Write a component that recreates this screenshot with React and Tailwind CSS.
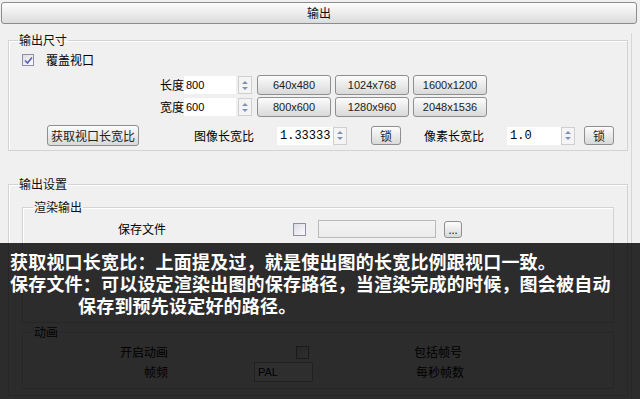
import React from "react";

const cjk = "font-['Noto_Sans_CJK_SC',sans-serif]";
const sans = "font-['Liberation_Sans',sans-serif]";
const mono = "font-['Liberation_Mono',monospace]";

const Btn = ({ className = "", children }) => (
  <button
    className={`flex items-center justify-center rounded-[3px] border border-[#8e8f8f] bg-linear-to-b from-[#fcfcfc] to-[#d9d9d9] text-[11px] leading-none text-[#222] ${className}`}
  >
    {children}
  </button>
);

const Spinner = ({ className = "" }) => (
  <div
    className={`flex h-[18px] w-[14px] flex-col items-center justify-center gap-[3px] border border-[#cfcfcf] bg-[#f4f4f4] ${className}`}
  >
    <svg width="6" height="3" viewBox="0 0 6 3">
      <path d="M0 3 L3 0 L6 3 Z" fill="#7f93b3" />
    </svg>
    <svg width="6" height="3" viewBox="0 0 6 3">
      <path d="M0 0 L3 3 L6 0 Z" fill="#7f93b3" />
    </svg>
  </div>
);

const Check = ({ checked, className = "" }) => (
  <div
    className={`flex h-[12px] w-[12px] items-center justify-center border border-[#8f8fa3] bg-linear-to-br from-[#dcdce6] to-[#fbfbfb] ${className}`}
  >
    {checked && (
      <svg width="9" height="9" viewBox="0 0 9 9">
        <path d="M1 4.5 L3.5 7 L8 1.5" stroke="#5b5fb0" strokeWidth="1.6" fill="none" />
      </svg>
    )}
  </div>
);

const Group = ({ label, className = "", legendClass = "ml-[9px]", children }) => (
  <fieldset className={`border border-[#d3d3d3] shadow-[inset_1px_1px_0_#ffffff] ${className}`}>
    <legend className={`px-[1px] text-[12px] leading-[14px] text-[#111] ${legendClass}`}>
      {label}
    </legend>
    {children}
  </fieldset>
);

export default function App() {
  return (
    <div className={`relative h-[399px] w-[640px] overflow-hidden bg-[#f0f0f0] ${cjk}`}>
      {/* title bar */}
      <div className="mx-[1px] mt-[2px] flex h-[22px] w-[636px] items-center justify-center rounded-[3px] border border-[#8c8c8c] bg-linear-to-b from-[#fdfdfd] to-[#dcdcdc] text-[12px] text-[#111]">
        输出
      </div>

      <div className="w-[632px] border-r border-[#d6d6d6] pb-[20px]">
        {/* 输出尺寸 */}
        <Group label="输出尺寸" className="mt-[9px] ml-[8px] w-[620px] pb-[4px]">
          <div className="mt-[6px] flex h-[14px] items-center pl-[13px]">
            <Check checked />
            <span className="ml-[12px] text-[12px] leading-[14px]">覆盖视口</span>
          </div>

          <div className="mt-[8px] flex h-[20px] items-center pl-[151px]">
            <span className="w-[24px] text-[12px]">长度</span>
            <div className={`flex h-[18px] w-[52px] items-center bg-white pl-[2px] text-[11px] ${sans}`}>800</div>
            <Spinner className="ml-[2px]" />
            <div className={`ml-[5px] flex gap-[4px] ${sans}`}>
              <Btn className="h-[20px] w-[74px]">640x480</Btn>
              <Btn className="h-[20px] w-[74px]">1024x768</Btn>
              <Btn className="h-[20px] w-[74px]">1600x1200</Btn>
            </div>
          </div>

          <div className="mt-[2px] flex h-[20px] items-center pl-[151px]">
            <span className="w-[24px] text-[12px]">宽度</span>
            <div className={`flex h-[18px] w-[52px] items-center bg-white pl-[2px] text-[11px] ${sans}`}>600</div>
            <Spinner className="ml-[2px]" />
            <div className={`ml-[5px] flex gap-[4px] ${sans}`}>
              <Btn className="h-[20px] w-[74px]">800x600</Btn>
              <Btn className="h-[20px] w-[74px]">1280x960</Btn>
              <Btn className="h-[20px] w-[74px]">2048x1536</Btn>
            </div>
          </div>

          <div className="mt-[8px] flex h-[21px] items-center pl-[38px]">
            <Btn className="h-[21px] w-[92px] text-[12px]">获取视口长宽比</Btn>
            <span className="ml-[55px] w-[60px] text-[12px]">图像长宽比</span>
            <div className={`ml-[23px] flex h-[18px] w-[56px] items-center bg-white pl-[3px] text-[12px] ${mono}`}>1.33333</div>
            <Spinner />
            <Btn className="ml-[24px] h-[19px] w-[30px] text-[12px]">锁</Btn>
            <span className="ml-[23px] w-[60px] text-[12px]">像素长宽比</span>
            <div className={`ml-[23px] flex h-[18px] w-[54px] items-center bg-white pl-[3px] text-[12px] ${mono}`}>1.0</div>
            <Spinner />
            <Btn className="ml-[9px] h-[19px] w-[30px] text-[12px]">锁</Btn>
          </div>
        </Group>

        {/* 输出设置 */}
        <Group label="输出设置" className="mt-[26px] ml-[8px] w-[620px] pb-[6px]">
          <Group label="渲染输出" legendClass="ml-[10px]" className="mt-[9px] ml-[13px] mr-[13px] h-[123px]">
            <div className="mt-[6px] flex h-[18px] items-center pl-[95px]">
              <span className="w-[48px] text-[12px]">保存文件</span>
              <Check className="ml-[127px] h-[13px] w-[13px]" />
              <div className="ml-[12px] h-[18px] w-[118px] border border-[#b9b9b9] bg-linear-to-b from-[#f4f4f4] to-[#ebebeb]" />
              <Btn className="ml-[8px] h-[17px] w-[18px] text-[10px]">...</Btn>
            </div>
          </Group>

          <Group label="动画" legendClass="ml-[10px]" className="mt-[2px] ml-[13px] mr-[13px] h-[64px]">
            <div className="mt-[6px] flex h-[14px] items-center pl-[97px]">
              <span className="w-[48px] text-[12px]">开启动画</span>
              <Check className="ml-[128px] h-[13px] w-[13px]" />
              <span className="ml-[105px] text-[12px]">包括帧号</span>
            </div>
            <div className="mt-[4px] flex h-[18px] items-center pl-[121px]">
              <span className="w-[24px] text-[12px]">帧频</span>
              <div className={`ml-[86px] flex h-[20px] w-[59px] items-center border border-[#b9b9b9] bg-white pl-[3px] text-[11px] ${sans}`}>
                PAL
              </div>
              <span className="ml-[103px] text-[12px]">每秒帧数</span>
            </div>
          </Group>
        </Group>
      </div>

      {/* caption overlay */}
      <div className="absolute top-[243px] right-0 bottom-0 left-0 bg-black/[0.82] pt-[7px] pl-[10px] text-[18px] leading-[22px] font-bold tracking-[0.2px] text-white">
        <p>获取视口长宽比：上面提及过，就是使出图的长宽比例跟视口一致。</p>
        <p>保存文件：可以设定渲染出图的保存路径，当渲染完成的时候，图会被自动</p>
        <p className="pl-[68px]">保存到预先设定好的路径。</p>
      </div>
    </div>
  );
}
